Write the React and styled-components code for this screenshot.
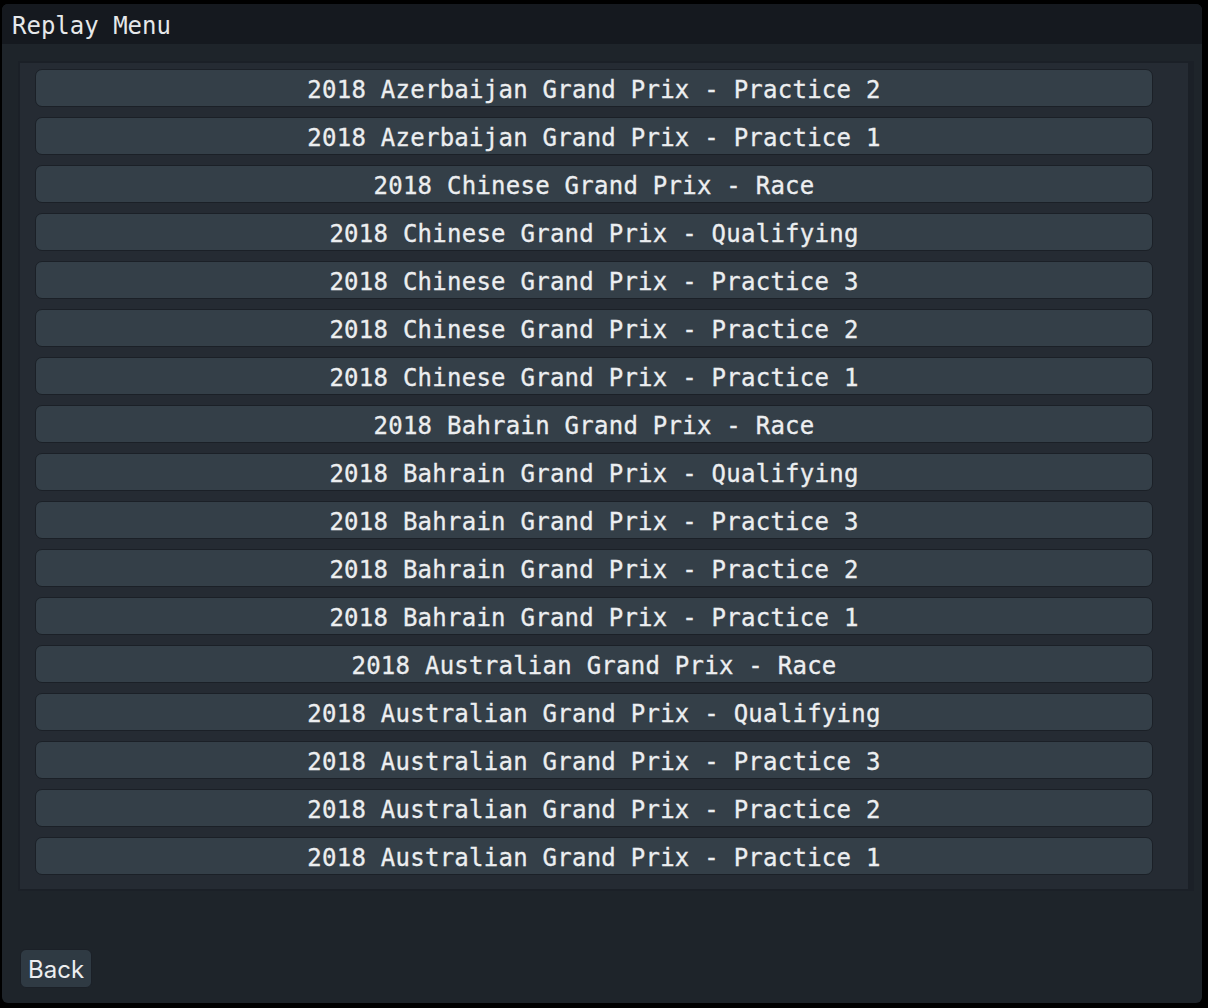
import React from 'react';
import styled, { createGlobalStyle } from 'styled-components';

const GlobalStyle = createGlobalStyle`
  html, body {
    margin: 0;
    padding: 0;
    background: #000;
  }
  #root {
    height: 1008px;
  }
`;

const Screen = styled.div`
  height: 1008px;
  padding: 4px 6px 5px 2px;
  box-sizing: border-box;
  display: flex;
`;

const Window = styled.div`
  flex: 1;
  display: flex;
  flex-direction: column;
  background: #1e242a;
  border-radius: 6px;
  overflow: hidden;
`;

const TitleBar = styled.div`
  height: 40px;
  flex-shrink: 0;
  box-sizing: border-box;
  background: #15191f;
  display: flex;
  align-items: center;
  padding: 4px 0 0 10px;
  color: #e6e8ea;
  font-family: "DejaVu Sans Mono", monospace;
  font-size: 24px;
`;

const Body = styled.div`
  flex: 1;
  display: flex;
  flex-direction: column;
  padding: 17px 8px 15px 16px;
`;

const ListPanel = styled.div`
  background: #252b33;
  border: 2px solid #1b2027;
  border-right-width: 6px;
  padding: 6px 35px 14px 15px;
  display: flex;
  flex-direction: column;
  gap: 10px;
`;

const ReplayButton = styled.button`
  height: 38px;
  box-sizing: border-box;
  background: #343f48;
  border: 1px solid #1b2027;
  border-radius: 7px;
  color: #eceef0;
  font-family: "DejaVu Sans Mono", monospace;
  font-size: 24px;
  letter-spacing: 0.25px;
  -webkit-text-stroke: 0.3px #eceef0;
  padding: 4px 0 0;
  cursor: pointer;

  &:hover {
    background: #3c4852;
  }
`;

const Spacer = styled.div`
  flex: 1;
`;

const BackButton = styled.button`
  align-self: flex-start;
  margin-left: 2px;
  height: 39px;
  box-sizing: border-box;
  padding: 1px 7px 0;
  background: #2f3a43;
  border: 1px solid #1b2027;
  border-radius: 6px;
  color: #eceef0;
  font-family: Inter, "Noto Sans", sans-serif;
  font-size: 24px;
  cursor: pointer;
`;

const replays = [
  '2018 Azerbaijan Grand Prix - Practice 2',
  '2018 Azerbaijan Grand Prix - Practice 1',
  '2018 Chinese Grand Prix - Race',
  '2018 Chinese Grand Prix - Qualifying',
  '2018 Chinese Grand Prix - Practice 3',
  '2018 Chinese Grand Prix - Practice 2',
  '2018 Chinese Grand Prix - Practice 1',
  '2018 Bahrain Grand Prix - Race',
  '2018 Bahrain Grand Prix - Qualifying',
  '2018 Bahrain Grand Prix - Practice 3',
  '2018 Bahrain Grand Prix - Practice 2',
  '2018 Bahrain Grand Prix - Practice 1',
  '2018 Australian Grand Prix - Race',
  '2018 Australian Grand Prix - Qualifying',
  '2018 Australian Grand Prix - Practice 3',
  '2018 Australian Grand Prix - Practice 2',
  '2018 Australian Grand Prix - Practice 1',
];

export default function App() {
  return (
    <>
      <GlobalStyle />
      <Screen>
        <Window>
          <TitleBar>Replay Menu</TitleBar>
          <Body>
            <ListPanel>
              {replays.map((name) => (
                <ReplayButton key={name}>{name}</ReplayButton>
              ))}
            </ListPanel>
            <Spacer />
            <BackButton>Back</BackButton>
          </Body>
        </Window>
      </Screen>
    </>
  );
}
